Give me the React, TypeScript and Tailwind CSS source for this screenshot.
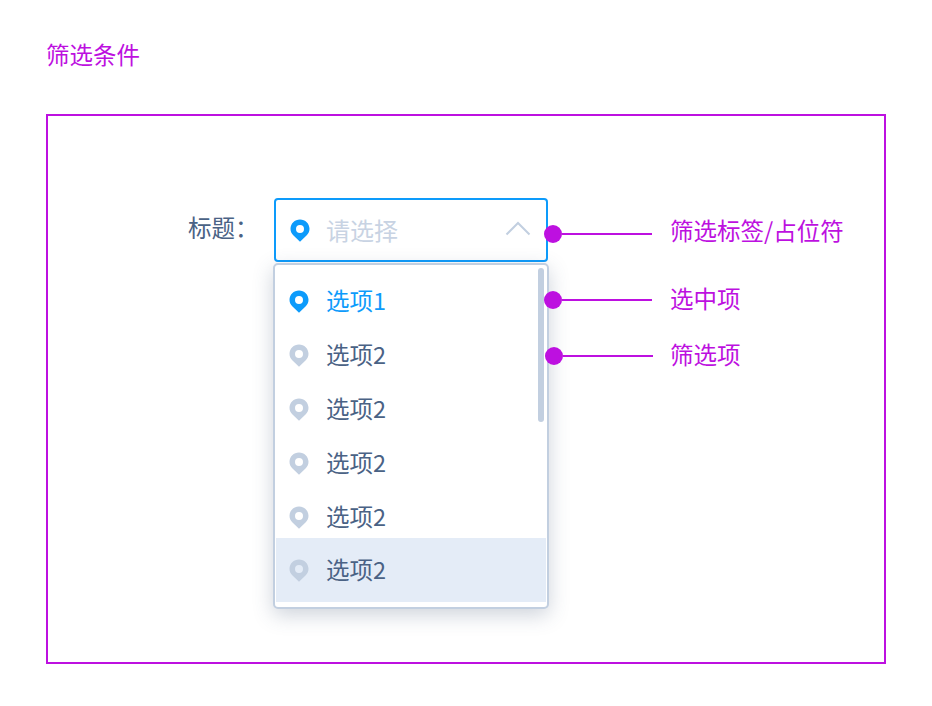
import React from 'react';

const FONT = 'font-["Noto_Sans_CJK_SC","Noto_Sans",sans-serif]';

function Pin({ color, className = '' }: { color: string; className?: string }) {
  return (
    <svg width="20" height="23" viewBox="0 0 20 23" className={`shrink-0 ${className}`}>
      <path
        fillRule="evenodd"
        d="M10 0.5C4.7 0.5 0.5 4.6 0.5 9.8c0 2.7 1.1 5 3 6.8L10 22.8l6.5-6.2c1.9-1.8 3-4.1 3-6.8C19.5 4.6 15.3 0.5 10 0.5ZM10 6a4 4 0 1 1 0 8 4 4 0 0 1 0-8Z"
        fill={color}
      />
    </svg>
  );
}

function Option({ label, active, hover }: { label: string; active?: boolean; hover?: boolean }) {
  return (
    <div
      className={`relative flex items-center gap-[17px] pl-[14px] ${hover ? '-mt-[6px] mx-px h-16 bg-[#e4ecf7] !pl-[13px]' : 'h-[54px]'}`}
    >
      <Pin color={active ? '#0d9bfb' : '#c2cfe0'} />
      <span className={`text-[23.5px] leading-none ${active ? 'text-[#0d9bfb]' : 'text-[#4a6285]'}`}>{label}</span>
    </div>
  );
}

function Note({ top, left, gap, lift, text }: { top: number; left: number; gap: number; lift: number; text: string }) {
  return (
    <div className="absolute flex items-center" style={{ top, left }}>
      <span className="h-[18px] w-[18px] rounded-full bg-[#bd10e0]" />
      <span className="h-[2px] w-[90px] bg-[#bd10e0]" />
      <span
        className="whitespace-nowrap text-[23.5px] leading-none text-[#bd10e0]"
        style={{ marginTop: -lift, marginLeft: gap }}
      >
        {text}
      </span>
    </div>
  );
}

export default function App() {
  return (
    <div className={`relative h-[706px] w-[932px] overflow-hidden bg-white pl-[46px] pt-[39px] ${FONT}`}>
      <h1 className="h-[30px] text-[23.5px] font-normal leading-[30px] text-[#bd10e0]">筛选条件</h1>

      <div className="mt-[45px] h-[550px] w-[840px] border-2 border-[#bd10e0] pl-[140px] pt-[82px]">
        <div className="flex items-start">
          <label className="w-[85px] pt-[14px] text-[23.5px] leading-[30px] text-[#4a6285]">标题：</label>
          <div className="w-[276px]">
            <div className="ml-px flex h-16 w-[274px] items-center rounded-[4px] border-2 border-[#0d9bfb] pl-[14px] pr-[15px]">
              <Pin color="#0d9bfb" />
              <span className="ml-[16px] flex-1 text-[24px] leading-none text-[#c8d3e3]">请选择</span>
              <svg width="26" height="15" viewBox="0 0 26 15" fill="none" className="-mt-[4px]">
                <path d="M1.5 13.5 13 2l11.5 11.5" stroke="#c2cfe0" strokeWidth="2" />
              </svg>
            </div>
            <div className="relative mt-px h-[346px] rounded-[5px] border-2 border-[#c2cfe0] bg-white pt-[9px] shadow-[0_6px_20px_rgba(60,80,110,0.25)]">
              <Option label="选项1" active />
              <Option label="选项2" />
              <Option label="选项2" />
              <Option label="选项2" />
              <Option label="选项2" />
              <Option label="选项2" hover />
              <div className="absolute right-[3px] top-[3px] h-[154px] w-[6px] rounded-[3px] bg-[#c2cfe0]" />
            </div>
          </div>
        </div>
      </div>

      <Note top={225} left={544} gap={18} lift={6} text="筛选标签/占位符" />
      <Note top={289} left={544} gap={18} lift={2} text="选中项" />
      <Note top={345} left={545} gap={17} lift={2} text="筛选项" />
    </div>
  );
}
